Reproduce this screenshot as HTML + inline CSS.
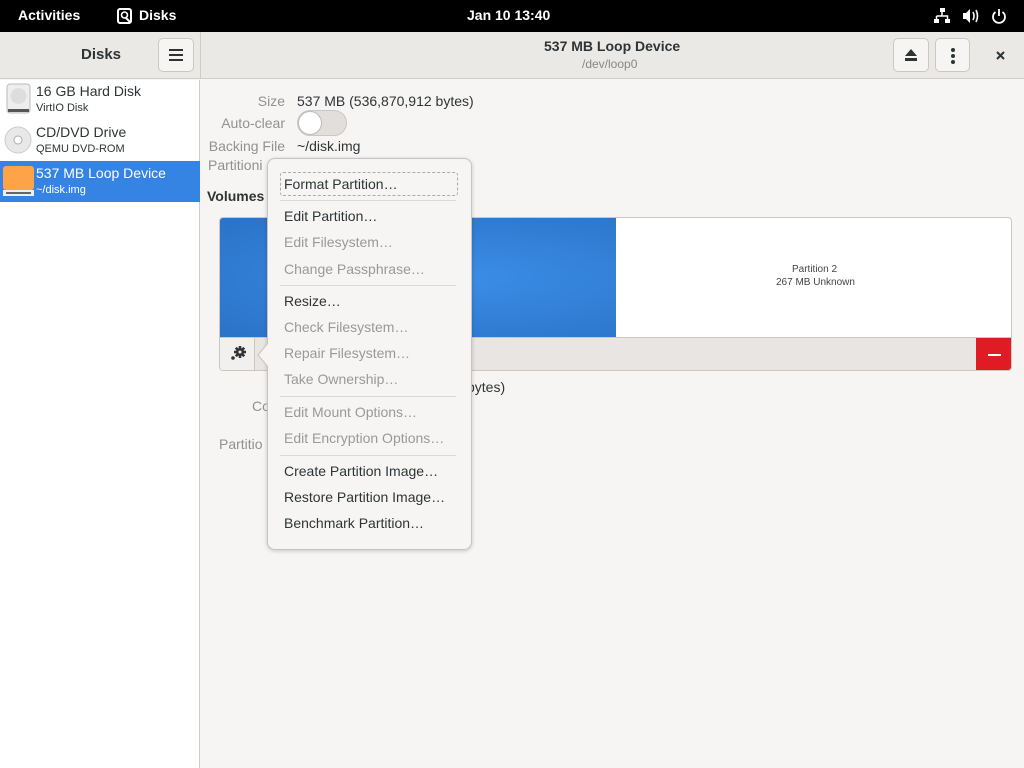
<!DOCTYPE html>
<html><head><meta charset="utf-8"><style>
*{box-sizing:border-box;margin:0;padding:0}
body{width:1024px;height:768px;overflow:hidden;background:#f6f5f4;font-family:"Liberation Sans","DejaVu Sans",sans-serif;position:relative;color:#2e3436}
.a{position:absolute;white-space:nowrap}
.top{left:0;top:0;width:1024px;height:32px;background:#000;color:#fff;font-size:14px;font-weight:bold}
.hdr{left:0;top:32px;width:1024px;height:47px;background:#ebe9e6;border-bottom:1px solid #d0ccc8}
.btn{background:#f6f5f4;border:1px solid #cdc7c2;border-radius:5px;height:34px;width:36px}
.side{left:0;top:80px;width:200px;height:688px;background:#fff;border-right:1px solid #d0ccc8}
.lbl{color:#919191;font-size:14px;text-align:right;width:85px}
.val{font-size:14px;color:#2e3436}
.pop{left:267px;top:158px;width:205px;height:392px;background:#f6f5f4;border:1px solid #c8c3be;border-radius:8px;box-shadow:0 1px 4px rgba(0,0,0,.2)}
.mi{left:284px;font-size:14px;color:#2e3436}
.dis{color:#999}
.sep{left:280px;width:176px;height:1px;background:#dcd8d4}
</style></head><body>
<div class="a top">
<span class="a" style="left:18px;top:7px">Activities</span>
<svg class="a" style="left:117px;top:8px" width="16" height="16" viewBox="0 0 16 16"><rect x="1" y="1" width="13" height="14" rx="2" fill="none" stroke="#fff" stroke-width="2"/><circle cx="7.5" cy="7" r="3" fill="none" stroke="#fff" stroke-width="1.6"/><path d="M9 10l4 4" stroke="#fff" stroke-width="2"/></svg>
<span class="a" style="left:139px;top:7px">Disks</span>
<span class="a" style="left:467px;top:7px">Jan 10 13:40</span>
<svg class="a" style="left:934px;top:8px" width="16" height="16" viewBox="0 0 16 16" fill="#fff"><rect x="6" y="0" width="5" height="4"/><rect x="0" y="11" width="5" height="4"/><rect x="11" y="11" width="5" height="4"/><path d="M8 4v4M2.5 8h11v3M2.5 8v3" stroke="#fff" stroke-width="1.5" fill="none"/></svg>
<svg class="a" style="left:962px;top:8px" width="18" height="16" viewBox="0 0 18 16"><path d="M1 5h3l4-4v14l-4-4H1z" fill="#fff"/><path d="M11 4q2 4 0 8M14 2q3 6 0 12" stroke="#fff" stroke-width="1.6" fill="none"/></svg>
<svg class="a" style="left:991px;top:8px" width="16" height="16" viewBox="0 0 16 16"><path d="M4.5 4a6 6 0 1 0 7 0" stroke="#fff" stroke-width="1.8" fill="none"/><path d="M8 1v7" stroke="#fff" stroke-width="1.8"/></svg>
</div>
<div class="a hdr">
<div class="a" style="left:200px;top:0;width:1px;height:47px;background:#d0ccc8"></div>
<span class="a" style="left:81px;top:14px;font-size:15px;font-weight:bold">Disks</span>
<div class="a btn" style="left:158px;top:6px"><svg class="a" style="left:10px;top:10px" width="14" height="12"><path d="M0 1h14M0 6h14M0 11h14" stroke="#2e3436" stroke-width="2"/></svg></div>
<span class="a" style="left:544px;top:6px;font-size:14px;font-weight:bold">537 MB Loop Device</span>
<span class="a" style="left:582px;top:25px;font-size:12px;color:#888">/dev/loop0</span>
<div class="a btn" style="left:893px;top:6px;width:36px"><svg class="a" style="left:10px;top:10px" width="14" height="13"><path d="M7 0l6 7H1z" fill="#2e3436"/><rect x="1" y="9" width="12" height="3" fill="#2e3436"/></svg></div>
<div class="a btn" style="left:935px;top:6px;width:35px"><svg class="a" style="left:14px;top:8px" width="6" height="18"><circle cx="3" cy="3" r="2" fill="#2e3436"/><circle cx="3" cy="9" r="2" fill="#2e3436"/><circle cx="3" cy="15" r="2" fill="#2e3436"/></svg></div>
<svg class="a" style="left:996px;top:19px" width="9" height="9"><path d="M1 1l7 7M8 1l-7 7" stroke="#2e3436" stroke-width="2"/></svg>
</div>
<div class="a side">
<svg class="a" style="left:6px;top:3px" width="25" height="32"><rect x="1" y="1" width="23" height="29" rx="3" fill="#eee" stroke="#bbb"/><circle cx="12.5" cy="13" r="8" fill="#ddd"/><rect x="2" y="26" width="21" height="3" fill="#555"/></svg>
<span class="a" style="left:36px;top:3px;font-size:14px">16 GB Hard Disk</span>
<span class="a" style="left:36px;top:22px;font-size:11px">VirtIO Disk</span>
<svg class="a" style="left:3px;top:45px" width="30" height="30"><circle cx="15" cy="15" r="13" fill="#e8e8e8" stroke="#ccc"/><circle cx="15" cy="15" r="4" fill="#fff" stroke="#aaa"/></svg>
<span class="a" style="left:36px;top:44px;font-size:14px">CD/DVD Drive</span>
<span class="a" style="left:36px;top:63px;font-size:11px">QEMU DVD-ROM</span>
<div class="a" style="left:0;top:81px;width:200px;height:41px;background:#3584e4"></div>
<svg class="a" style="left:3px;top:86px" width="31" height="31"><rect x="0" y="0" width="31" height="24" rx="3" fill="#ffa348"/><rect x="0" y="24" width="31" height="6" fill="#eee"/><rect x="3" y="26" width="25" height="2" fill="#666"/></svg>
<span class="a" style="left:36px;top:85px;font-size:14px;color:#fff">537 MB Loop Device</span>
<span class="a" style="left:36px;top:104px;font-size:11px;color:#fff">~/disk.img</span>
</div>
<span class="a lbl" style="left:200px;top:93px">Size</span><span class="a val" style="left:297px;top:93px">537 MB (536,870,912 bytes)</span>
<span class="a lbl" style="left:200px;top:115px">Auto-clear</span>
<div class="a" style="left:297px;top:110px;width:50px;height:26px;border-radius:13px;background:#e1dedb;border:1px solid #cdc7c2"><div class="a" style="left:0;top:0;width:24px;height:24px;border-radius:12px;background:#fff;border:1px solid #bbb"></div></div>
<span class="a lbl" style="left:200px;top:138px">Backing File</span><span class="a val" style="left:297px;top:138px">~/disk.img</span>
<span class="a lbl" style="top:157px;text-align:left;left:208px">Partitioni</span>
<span class="a" style="left:207px;top:188px;font-size:14px;font-weight:bold">Volumes</span>
<div class="a" style="left:219px;top:217px;width:793px;height:154px;border:1px solid #cdc7c2;border-radius:4px;background:#fff;overflow:hidden">
<div class="a" style="left:0;top:0;width:396px;height:120px;background:radial-gradient(ellipse at 60% 50%,#3a8ee6,#2b72c8)"></div>
<span class="a" style="left:572px;top:46px;font-size:10px;color:#444">Partition 2</span>
<span class="a" style="left:556px;top:59px;font-size:10px;color:#444">267 MB Unknown</span>
<div class="a" style="left:0;top:119px;width:793px;height:35px;background:#e8e5e2;border-top:1px solid #cdc7c2"></div>
<div class="a" style="left:0;top:120px;width:35px;height:34px;background:#f2f0ee;border-right:1px solid #cdc7c2"></div>
<svg class="a" style="left:9px;top:127px" width="18" height="18" viewBox="0 0 18 18"><g transform="translate(11,7)" fill="#2e3436"><circle r="4"/><rect x="-1.3" y="-6" width="2.6" height="12"/><rect x="-6" y="-1.3" width="12" height="2.6"/><rect x="-1.3" y="-6" width="2.6" height="12" transform="rotate(45)"/><rect x="-1.3" y="-6" width="2.6" height="12" transform="rotate(-45)"/><circle r="1.5" fill="#f2f0ee"/></g><circle cx="4" cy="13" r="1.8" fill="#2e3436"/></svg>
<div class="a" style="left:756px;top:120px;width:36px;height:34px;background:#e01b24"><div class="a" style="left:12px;top:16px;width:13px;height:2px;background:#fff"></div></div>
</div>
<span class="a val" style="left:467px;top:379px">bytes)</span>
<span class="a lbl" style="left:252px;top:398px;text-align:left">Co</span>
<span class="a lbl" style="left:219px;top:436px;text-align:left">Partitio</span>
<div class="a pop"></div>
<svg class="a" style="left:257px;top:343px" width="12" height="24"><path d="M11 0L1 12l10 12" fill="#f6f5f4" stroke="#c8c3be"/></svg>
<div class="a" style="left:280px;top:172px;width:178px;height:24px;border:1px dashed #b0aaa5;border-radius:3px"></div>
<span class="a mi" style="top:176px">Format Partition…</span>
<div class="a sep" style="top:200px"></div>
<span class="a mi" style="top:208px">Edit Partition…</span>
<span class="a mi dis" style="top:234px">Edit Filesystem…</span>
<span class="a mi dis" style="top:261px">Change Passphrase…</span>
<div class="a sep" style="top:285px"></div>
<span class="a mi" style="top:293px">Resize…</span>
<span class="a mi dis" style="top:319px">Check Filesystem…</span>
<span class="a mi dis" style="top:345px">Repair Filesystem…</span>
<span class="a mi dis" style="top:371px">Take Ownership…</span>
<div class="a sep" style="top:396px"></div>
<span class="a mi dis" style="top:404px">Edit Mount Options…</span>
<span class="a mi dis" style="top:430px">Edit Encryption Options…</span>
<div class="a sep" style="top:455px"></div>
<span class="a mi" style="top:463px">Create Partition Image…</span>
<span class="a mi" style="top:489px">Restore Partition Image…</span>
<span class="a mi" style="top:515px">Benchmark Partition…</span>
</body></html>
